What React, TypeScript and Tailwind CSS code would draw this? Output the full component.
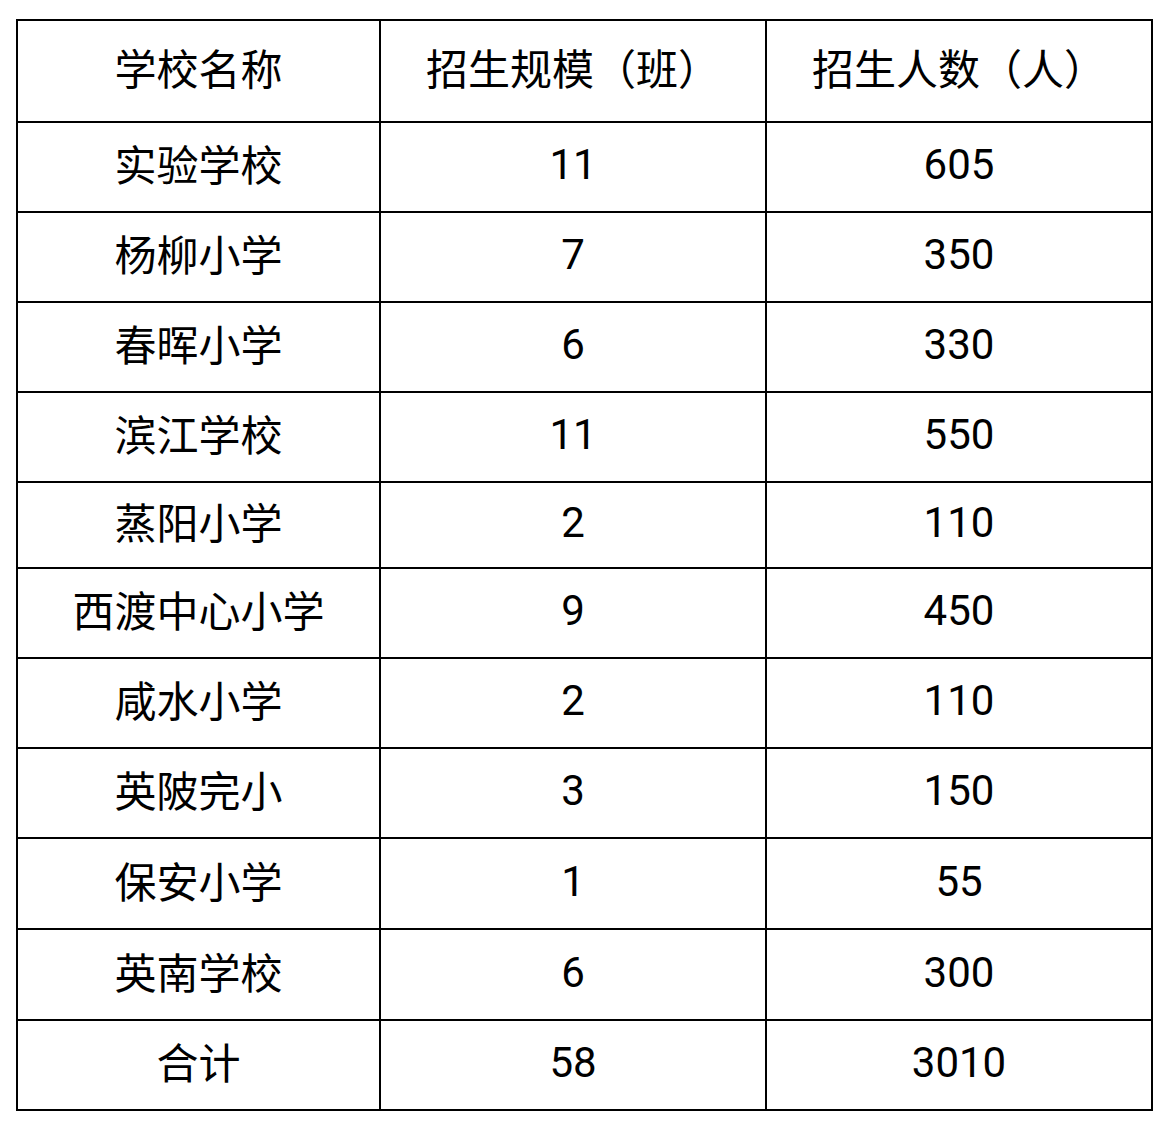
import React from "react";

const rows = [
  { name: "实验学校", classes: "11", students: "605", h: "h-[90px]" },
  { name: "杨柳小学", classes: "7", students: "350", h: "h-[90px]" },
  { name: "春晖小学", classes: "6", students: "330", h: "h-[90px]" },
  { name: "滨江学校", classes: "11", students: "550", h: "h-[90px]" },
  { name: "蒸阳小学", classes: "2", students: "110", h: "h-[86px]" },
  { name: "西渡中心小学", classes: "9", students: "450", h: "h-[90px]" },
  { name: "咸水小学", classes: "2", students: "110", h: "h-[90px]" },
  { name: "英陂完小", classes: "3", students: "150", h: "h-[90px]" },
  { name: "保安小学", classes: "1", students: "55", h: "h-[91px]" },
  { name: "英南学校", classes: "6", students: "300", h: "h-[91px]" },
  { name: "合计", classes: "58", students: "3010", h: "h-[90px]" },
];

function Cell({ children, h, num }: { children: React.ReactNode; h: string; num?: boolean }) {
  return (
    <div
      className={`${h} flex items-center justify-center border-r-2 border-b-2 border-black ${
        num ? "pb-[4px]" : ""
      }`}
    >
      {children}
    </div>
  );
}

export default function App() {
  return (
    <div
      className="bg-white w-[1176px] h-[1132px] pt-[19px] pl-[16px] text-black text-[42px] leading-none"
      style={{ fontFamily: 'Roboto, "Noto Sans CJK SC", sans-serif' }}
    >
      <div className="grid grid-cols-[363px_386px_386px] w-[1137px] border-l-2 border-t-2 border-black">
        <Cell h="h-[102px]">学校名称</Cell>
        <Cell h="h-[102px]">招生规模（班）</Cell>
        <Cell h="h-[102px]">招生人数（人）</Cell>
        {rows.map((r, i) => (
          <React.Fragment key={i}>
            <Cell h={r.h}>{r.name}</Cell>
            <Cell h={r.h} num>
              {r.classes}
            </Cell>
            <Cell h={r.h} num>
              {r.students}
            </Cell>
          </React.Fragment>
        ))}
      </div>
    </div>
  );
}
